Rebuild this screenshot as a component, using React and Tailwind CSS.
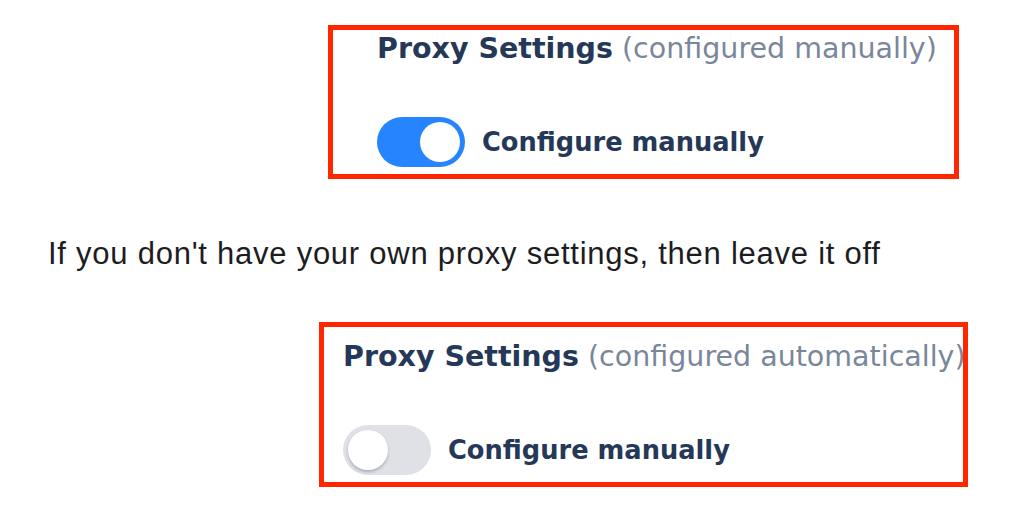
import { useState } from "react";

function Toggle({ on, onChange }) {
  return (
    <button
      type="button"
      onClick={() => onChange(!on)}
      className={
        "relative flex h-[50px] w-[88px] shrink-0 items-center rounded-full px-[5px] " +
        (on ? "justify-end bg-[#2684ff]" : "justify-start bg-[#dfe1e6]")
      }
    >
      <span
        className={
          "block h-[40px] w-[40px] rounded-full bg-white " +
          (on ? "" : "shadow-[0_2px_3px_rgba(9,30,66,0.25)]")
        }
      />
    </button>
  );
}

function ProxyCard({ className, padLeft, padTop, on, onChange }) {
  return (
    <div
      className={
        "overflow-hidden border-[5px] border-[#ff2600] font-['DejaVu_Sans',sans-serif] " + className
      }
    >
      <div className={padLeft + " " + padTop + " whitespace-nowrap"}>
        <div className="text-[28.5px] leading-[34px]">
          <span className="font-bold text-[#253858]">Proxy Settings</span>{" "}
          <span className="text-[#7a869a]">
            (configured {on ? "manually" : "automatically"})
          </span>
        </div>
        <div className="mt-[51px] flex items-center gap-[17px]">
          <Toggle on={on} onChange={onChange} />
          <span className="text-[25.7px] font-bold text-[#253858]">Configure manually</span>
        </div>
      </div>
    </div>
  );
}

export default function App() {
  const [manual, setManual] = useState(true);
  const [auto, setAuto] = useState(false);

  return (
    <div className="min-h-[508px] w-[1012px] bg-white pt-[25px]">
      <ProxyCard
        className="ml-[328px] h-[154px] w-[631px]"
        padLeft="pl-[44px]"
        padTop="pt-[2px]"
        on={manual}
        onChange={setManual}
      />

      <p className="ml-[48px] mt-[58px] font-['Liberation_Sans',Arial,sans-serif] text-[31px] leading-[34px] tracking-[0.75px] text-[#1d1d1f]">
        If you don't have your own proxy settings, then leave it off
      </p>

      <ProxyCard
        className="ml-[319px] mt-[51px] h-[165px] w-[649px]"
        padLeft="pl-[19px]"
        padTop="pt-[13px]"
        on={auto}
        onChange={setAuto}
      />
    </div>
  );
}
